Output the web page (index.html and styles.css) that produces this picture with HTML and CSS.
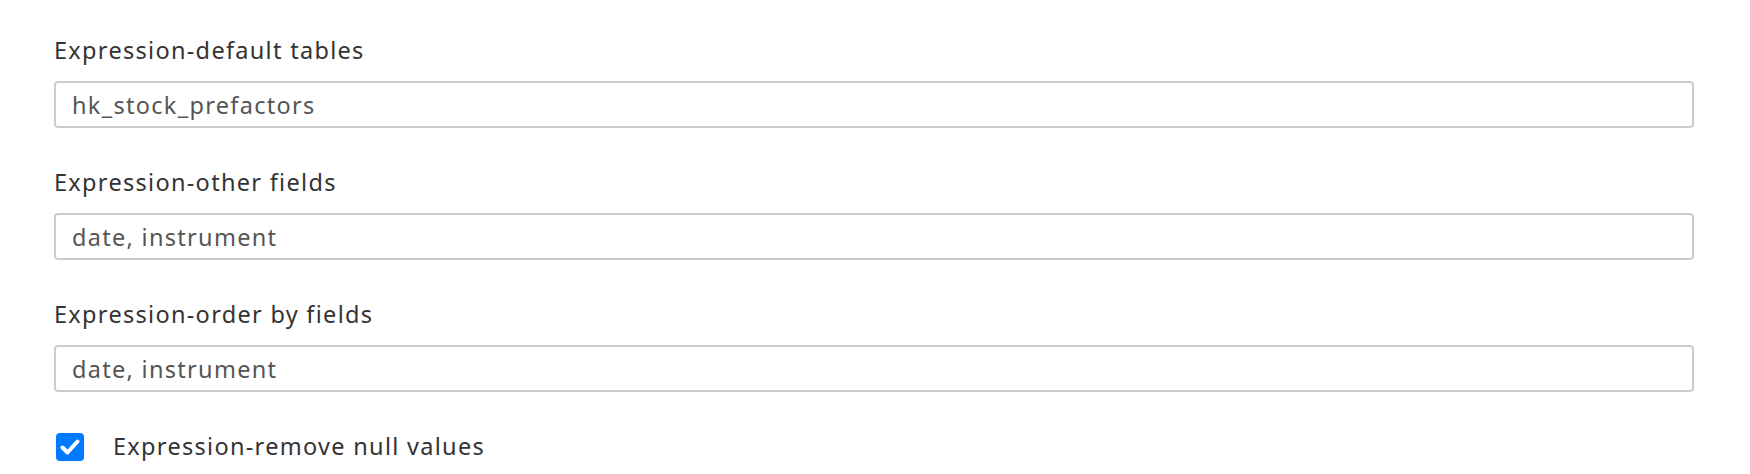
FILE: index.html
```html
<!DOCTYPE html>
<html lang="en">
<head>
  <meta charset="UTF-8">
  <meta name="viewport" content="width=device-width, initial-scale=1.0">
  <title>Expression settings</title>
  <link rel="stylesheet" href="styles.css">
</head>
<body>
  <!-- Expression options form -->
  <form class="settings">
    <div class="field">
      <label class="field-label" for="default-tables">Expression-default tables</label>
      <input class="field-input" id="default-tables" type="text" value="hk_stock_prefactors">
    </div>
    <div class="field">
      <label class="field-label" for="other-fields">Expression-other fields</label>
      <input class="field-input" id="other-fields" type="text" value="date, instrument">
    </div>
    <div class="field">
      <label class="field-label" for="order-fields">Expression-order by fields</label>
      <input class="field-input" id="order-fields" type="text" value="date, instrument">
    </div>
    <label class="check-row" for="remove-null">
      <span class="check-box">
        <svg viewBox="0 0 28 28" width="28" height="28">
          <path d="M6.5 14.5 L11.5 19.5 L21.5 8.5" fill="none" stroke="#fff" stroke-width="4" stroke-linecap="round" stroke-linejoin="round"/>
        </svg>
      </span>
      <span class="check-text">Expression-remove null values</span>
    </label>
  </form>
</body>
</html>
```

FILE: styles.css
```css
/* General Styles */
body {
  margin: 0;
  font-family: 'Noto Sans', 'Open Sans', sans-serif;
  background-color: #fff;
  color: #333;
}

/* Form */
.settings {
  display: flex;
  flex-direction: column;
  width: 1640px;
  padding: 34px 0 0 54px;
}

.field {
  display: flex;
  flex-direction: column;
  margin-bottom: 38px;
}

.field-label {
  font-size: 23.5px;
  line-height: 33px;
  letter-spacing: 1.3px;
  margin-bottom: 14px;
  color: #333;
}

.field-input {
  box-sizing: border-box;
  height: 47px;
  width: 100%;
  margin: 0;
  padding: 0 16px;
  border: 2px solid #ccc;
  border-radius: 4px;
  font-family: inherit;
  font-size: 23.5px;
  letter-spacing: 1.3px;
  color: #555;
  background-color: #fff;
  outline: none;
}

/* Checkbox row */
.check-row {
  display: flex;
  align-items: center;
  gap: 29px;
  padding-left: 2px;
}

.check-box {
  display: flex;
  width: 28px;
  height: 28px;
  border-radius: 4px;
  background-color: #007bff;
}

.check-text {
  font-size: 23.5px;
  line-height: 33px;
  letter-spacing: 1.3px;
  color: #333;
}
```
